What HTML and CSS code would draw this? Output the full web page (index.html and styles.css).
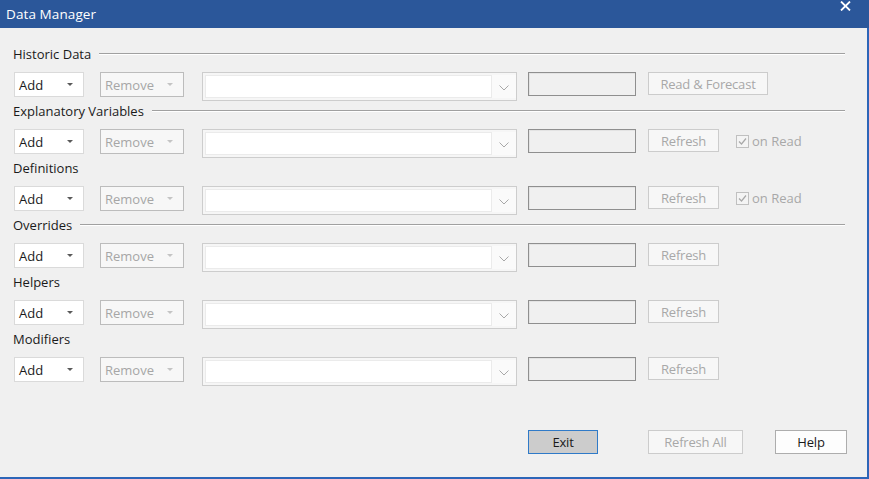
FILE: index.html
```
<!DOCTYPE html>
<html>
<head>
<meta charset="utf-8">
<link rel="stylesheet" href="styles.css">
</head>
<body>
<div class="window">
  <div class="titlebar">
    <span class="title">Data Manager</span>
    <svg class="close" width="11" height="10" viewBox="0 0 11 10"><path d="M1 0.5 L10 9.5 M10 0.5 L1 9.5" stroke="#fff" stroke-width="1.8"/></svg>
  </div>
  <div class="client">
    <div class="label-row"><span>Historic Data</span><span class="rule"></span></div>
    <div class="row">
      <div class="drop"><span>Add</span><i class="tri"></i></div>
      <div class="drop disabled"><span>Remove</span><i class="tri"></i></div>
      <div class="combo"><div class="edit"></div><div class="arrow"><svg width="10" height="6" viewBox="0 0 10 6"><path d="M0.5 0.5 L5 5 L9.5 0.5" fill="none" stroke="#a8a8a8" stroke-width="1"/></svg></div></div>
      <div class="textbox"></div>
      <div class="btn dis wide">Read &amp; Forecast</div>
    </div>

    <div class="label-row"><span>Explanatory Variables</span><span class="rule"></span></div>
    <div class="row">
      <div class="drop"><span>Add</span><i class="tri"></i></div>
      <div class="drop disabled"><span>Remove</span><i class="tri"></i></div>
      <div class="combo"><div class="edit"></div><div class="arrow"><svg width="10" height="6" viewBox="0 0 10 6"><path d="M0.5 0.5 L5 5 L9.5 0.5" fill="none" stroke="#a8a8a8" stroke-width="1"/></svg></div></div>
      <div class="textbox"></div>
      <div class="btn dis">Refresh</div>
      <div class="check"><span class="box"><svg width="11" height="11" viewBox="0 0 11 11"><path d="M2 5.5 L4.5 8 L9 2.5" fill="none" stroke="#a8a8a8" stroke-width="1.2"/></svg></span><span>on Read</span></div>
    </div>

    <div class="label-row"><span>Definitions</span></div>
    <div class="row">
      <div class="drop"><span>Add</span><i class="tri"></i></div>
      <div class="drop disabled"><span>Remove</span><i class="tri"></i></div>
      <div class="combo"><div class="edit"></div><div class="arrow"><svg width="10" height="6" viewBox="0 0 10 6"><path d="M0.5 0.5 L5 5 L9.5 0.5" fill="none" stroke="#a8a8a8" stroke-width="1"/></svg></div></div>
      <div class="textbox"></div>
      <div class="btn dis">Refresh</div>
      <div class="check"><span class="box"><svg width="11" height="11" viewBox="0 0 11 11"><path d="M2 5.5 L4.5 8 L9 2.5" fill="none" stroke="#a8a8a8" stroke-width="1.2"/></svg></span><span>on Read</span></div>
    </div>

    <div class="label-row"><span>Overrides</span><span class="rule"></span></div>
    <div class="row">
      <div class="drop"><span>Add</span><i class="tri"></i></div>
      <div class="drop disabled"><span>Remove</span><i class="tri"></i></div>
      <div class="combo"><div class="edit"></div><div class="arrow"><svg width="10" height="6" viewBox="0 0 10 6"><path d="M0.5 0.5 L5 5 L9.5 0.5" fill="none" stroke="#a8a8a8" stroke-width="1"/></svg></div></div>
      <div class="textbox"></div>
      <div class="btn dis">Refresh</div>
    </div>

    <div class="label-row"><span>Helpers</span></div>
    <div class="row">
      <div class="drop"><span>Add</span><i class="tri"></i></div>
      <div class="drop disabled"><span>Remove</span><i class="tri"></i></div>
      <div class="combo"><div class="edit"></div><div class="arrow"><svg width="10" height="6" viewBox="0 0 10 6"><path d="M0.5 0.5 L5 5 L9.5 0.5" fill="none" stroke="#a8a8a8" stroke-width="1"/></svg></div></div>
      <div class="textbox"></div>
      <div class="btn dis">Refresh</div>
    </div>

    <div class="label-row"><span>Modifiers</span></div>
    <div class="row">
      <div class="drop"><span>Add</span><i class="tri"></i></div>
      <div class="drop disabled"><span>Remove</span><i class="tri"></i></div>
      <div class="combo"><div class="edit"></div><div class="arrow"><svg width="10" height="6" viewBox="0 0 10 6"><path d="M0.5 0.5 L5 5 L9.5 0.5" fill="none" stroke="#a8a8a8" stroke-width="1"/></svg></div></div>
      <div class="textbox"></div>
      <div class="btn dis">Refresh</div>
    </div>

    <div class="footer">
      <div class="btn exit">Exit</div>
      <div class="btn dis refresh-all">Refresh All</div>
      <div class="btn help">Help</div>
    </div>
  </div>
</div>
</body>
</html>
```
FILE: styles.css
```
* { box-sizing: border-box; }
html, body { margin: 0; padding: 0; }
body {
  font-family: "Open Sans", "Noto Sans", "DejaVu Sans", sans-serif;
  font-size: 13px;
  color: #1a1a1a;
  background: #f0f0f0;
}
.window {
  width: 869px;
  height: 479px;
  display: flex;
  flex-direction: column;
}
.titlebar {
  height: 28px;
  flex: none;
  background: #2b579a;
  color: #fff;
  display: flex;
  align-items: center;
  padding-left: 6px;
  padding-right: 18px;
}
.title { font-size: 13.5px; letter-spacing: 0.1px; }
.close { margin-left: auto; align-self: flex-start; margin-top: 1px; }
.client {
  flex: 1;
  background: #f0f0f0;
  border-right: 2px solid #2d66b8;
  border-bottom: 2px solid #2d66b8;
  padding: 16px 0 23px 13px;
  display: flex;
  flex-direction: column;
}
.label-row {
  height: 18px;
  width: 832px;
  display: flex;
  align-items: center;
  gap: 8px;
  line-height: 18px;
  padding-top: 1px;
}
.rule {
  flex: 1;
  height: 2px;
  border-top: 1px solid #a0a0a0;
  border-bottom: 1px solid #ffffff;
}
.row {
  margin-top: 10px;
  height: 29px;
  display: flex;
  align-items: flex-start;
  padding-left: 1px;
}
.drop {
  width: 70px;
  height: 25px;
  background: #ffffff;
  border: 1px solid #dadada;
  display: flex;
  align-items: center;
  padding-left: 4px;
  padding-right: 10px;
}
.drop span { flex: 1; font-size: 13px; }
.tri {
  width: 0; height: 0;
  border-left: 3px solid transparent;
  border-right: 3px solid transparent;
  border-top: 3px solid #5a5a5a;
}
.drop.disabled {
  width: 84px;
  margin-left: 16px;
  background: #f7f7f7;
  border-color: #bcbcbc;
  color: #a6a6a6;
}
.drop.disabled .tri { border-top-color: #c4c4c4; }
.combo {
  margin-left: 18px;
  width: 315px;
  height: 29px;
  border: 1px solid #cdcdcd;
  background: #f6f6f6;
  display: flex;
  padding: 2px 0 2px 2px;
}
.combo .edit {
  flex: 1;
  background: #fff;
  border: 1px solid #ebebeb;
}
.combo .arrow {
  width: 24px;
  background: #fafafa;
  display: flex;
  align-items: center;
  justify-content: center;
  padding-top: 3px;
}
.textbox {
  margin-left: 11px;
  width: 108px;
  height: 24px;
  background: #f0f0f0;
  border: 1px solid #8f8f8f;
  box-shadow: inset 1px 1px 0 #e3e3e3;
}
.btn {
  height: 23px;
  display: flex;
  align-items: center;
  justify-content: center;
  font-size: 13px;
  letter-spacing: -0.2px;
}
.row .btn { margin-left: 12px; width: 71px; }
.row .btn.wide { width: 120px; }
.btn.dis {
  background: #f7f7f7;
  border: 1px solid #cccccc;
  color: #a8a8a8;
}
.check {
  margin-left: 17px;
  margin-top: 5px;
  display: flex;
  align-items: center;
  gap: 3px;
  color: #a8a8a8;
  font-size: 13px;
  line-height: 14px;
}
.check .box {
  width: 13px;
  height: 13px;
  border: 1px solid #c0c0c0;
  background: #f4f4f4;
  display: flex;
  align-items: center;
  justify-content: center;
}
.footer {
  margin-top: auto;
  margin-left: 515px;
  display: flex;
  align-items: flex-start;
}
.footer .btn { height: 24px; }
.btn.exit {
  width: 70px;
  background: #cccccc;
  border: 1px solid #2f7ac8;
  color: #1a1a1a;
}
.btn.refresh-all { width: 95px; margin-left: 50px; }
.btn.help {
  width: 72px;
  margin-left: 32px;
  background: #fdfdfd;
  border: 1px solid #adadad;
  color: #1a1a1a;
}
```
